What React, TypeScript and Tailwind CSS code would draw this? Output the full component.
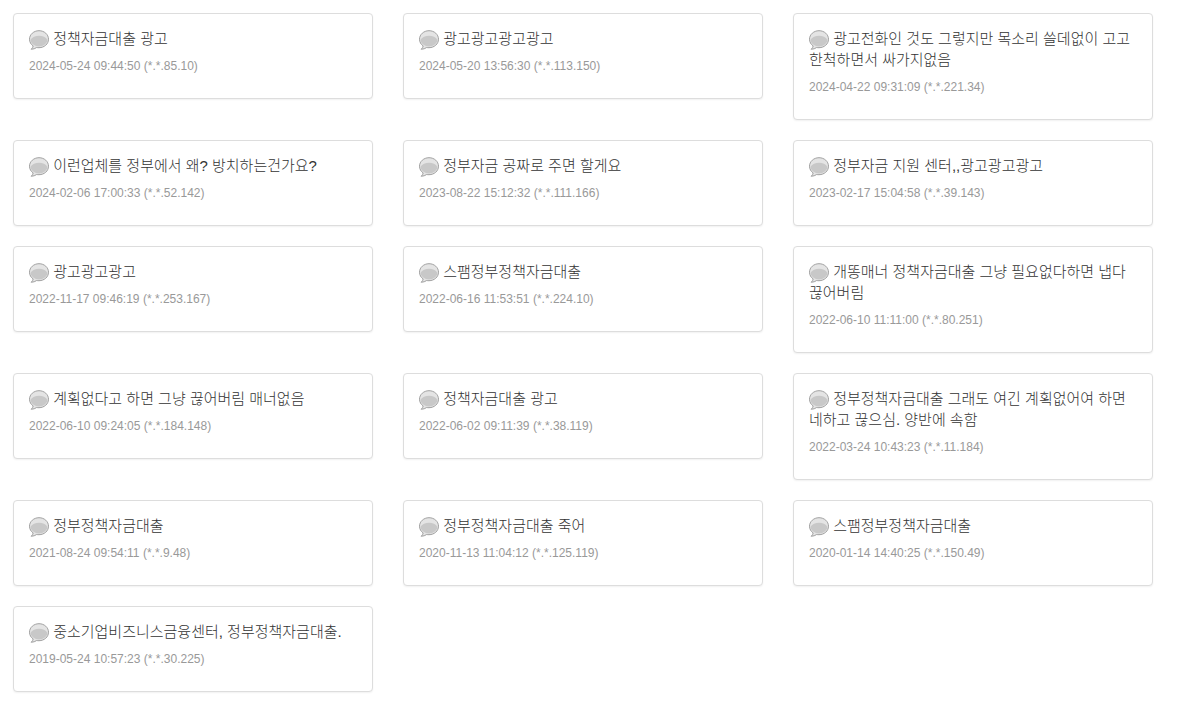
interface Comment {
  text: string;
  date: string;
  ip: string;
}

const COMMENTS: Comment[] = [
  { text: '정책자금대출 광고', date: '2024-05-24 09:44:50', ip: '*.*.85.10' },
  { text: '광고광고광고광고', date: '2024-05-20 13:56:30', ip: '*.*.113.150' },
  { text: '광고전화인 것도 그렇지만 목소리 쓸데없이 고고한척하면서 싸가지없음', date: '2024-04-22 09:31:09', ip: '*.*.221.34' },
  { text: '이런업체를 정부에서 왜? 방치하는건가요?', date: '2024-02-06 17:00:33', ip: '*.*.52.142' },
  { text: '정부자금 공짜로 주면 할게요', date: '2023-08-22 15:12:32', ip: '*.*.111.166' },
  { text: '정부자금 지원 센터,,광고광고광고', date: '2023-02-17 15:04:58', ip: '*.*.39.143' },
  { text: '광고광고광고', date: '2022-11-17 09:46:19', ip: '*.*.253.167' },
  { text: '스팸정부정책자금대출', date: '2022-06-16 11:53:51', ip: '*.*.224.10' },
  { text: '개똥매너 정책자금대출 그냥 필요없다하면 냅다 끊어버림', date: '2022-06-10 11:11:00', ip: '*.*.80.251' },
  { text: '계획없다고 하면 그냥 끊어버림 매너없음', date: '2022-06-10 09:24:05', ip: '*.*.184.148' },
  { text: '정책자금대출 광고', date: '2022-06-02 09:11:39', ip: '*.*.38.119' },
  { text: '정부정책자금대출 그래도 여긴 계획없어여 하면 네하고 끊으심. 양반에 속함', date: '2022-03-24 10:43:23', ip: '*.*.11.184' },
  { text: '정부정책자금대출', date: '2021-08-24 09:54:11', ip: '*.*.9.48' },
  { text: '정부정책자금대출 죽어', date: '2020-11-13 11:04:12', ip: '*.*.125.119' },
  { text: '스팸정부정책자금대출', date: '2020-01-14 14:40:25', ip: '*.*.150.49' },
  { text: '중소기업비즈니스금융센터, 정부정책자금대출.', date: '2019-05-24 10:57:23', ip: '*.*.30.225' },
];

function BubbleIcon() {
  return (
    <svg viewBox="0 0 20 20" className="inline-block w-5 h-5 -my-1 align-middle" aria-hidden="true">
      <path
        d="M10 .7C4.800.7.500 4.500.500 9.200c0 2.800 1.400 5.200 3.700 6.700-.2 1.200-.9 2.300-2 3.400 2.200-.1 4-.8 5.500-1.800.8.200 1.500.2 2.300.2 5.300 0 9.500-3.800 9.500-8.500S15.300.7 10 .7z"
        fill="#e4e4e4"
        stroke="#a0a0a0"
        strokeWidth="1"
      />
      <path d="M1.500 9.800C3.200 7 6.400 5.700 10 5.700s6.800 1.300 8.500 4.100c-.4 3.900-4.100 6.700-8.500 6.700S1.900 13.700 1.500 9.800z" fill="#c8c8c8" />
    </svg>
  );
}

function CommentCard({ text, date, ip }: Comment) {
  return (
    <li className="rounded border border-[#dddddd] bg-white px-[15px] pt-[14px] pb-[23px] shadow-[0_1px_2px_rgba(0,0,0,0.06)]">
      <p className="text-[15px] leading-[21px] font-light text-[#333333]">
        <BubbleIcon /> {text}
      </p>
      <p className="mt-2 text-xs leading-[18px] text-[#999999]">
        <time>{date}</time> ({ip})
      </p>
    </li>
  );
}

export default function App() {
  return (
    <main className="pt-[13px] pr-[26px] pb-2 pl-[13px] font-['Liberation_Sans','Noto_Sans_CJK_KR',sans-serif]" lang="ko">
      <ul className="grid grid-cols-1 sm:grid-cols-2 lg:grid-cols-3 items-start gap-x-[30px] gap-y-5">
        {COMMENTS.map((c) => (
          <CommentCard key={c.date} {...c} />
        ))}
      </ul>
    </main>
  );
}
